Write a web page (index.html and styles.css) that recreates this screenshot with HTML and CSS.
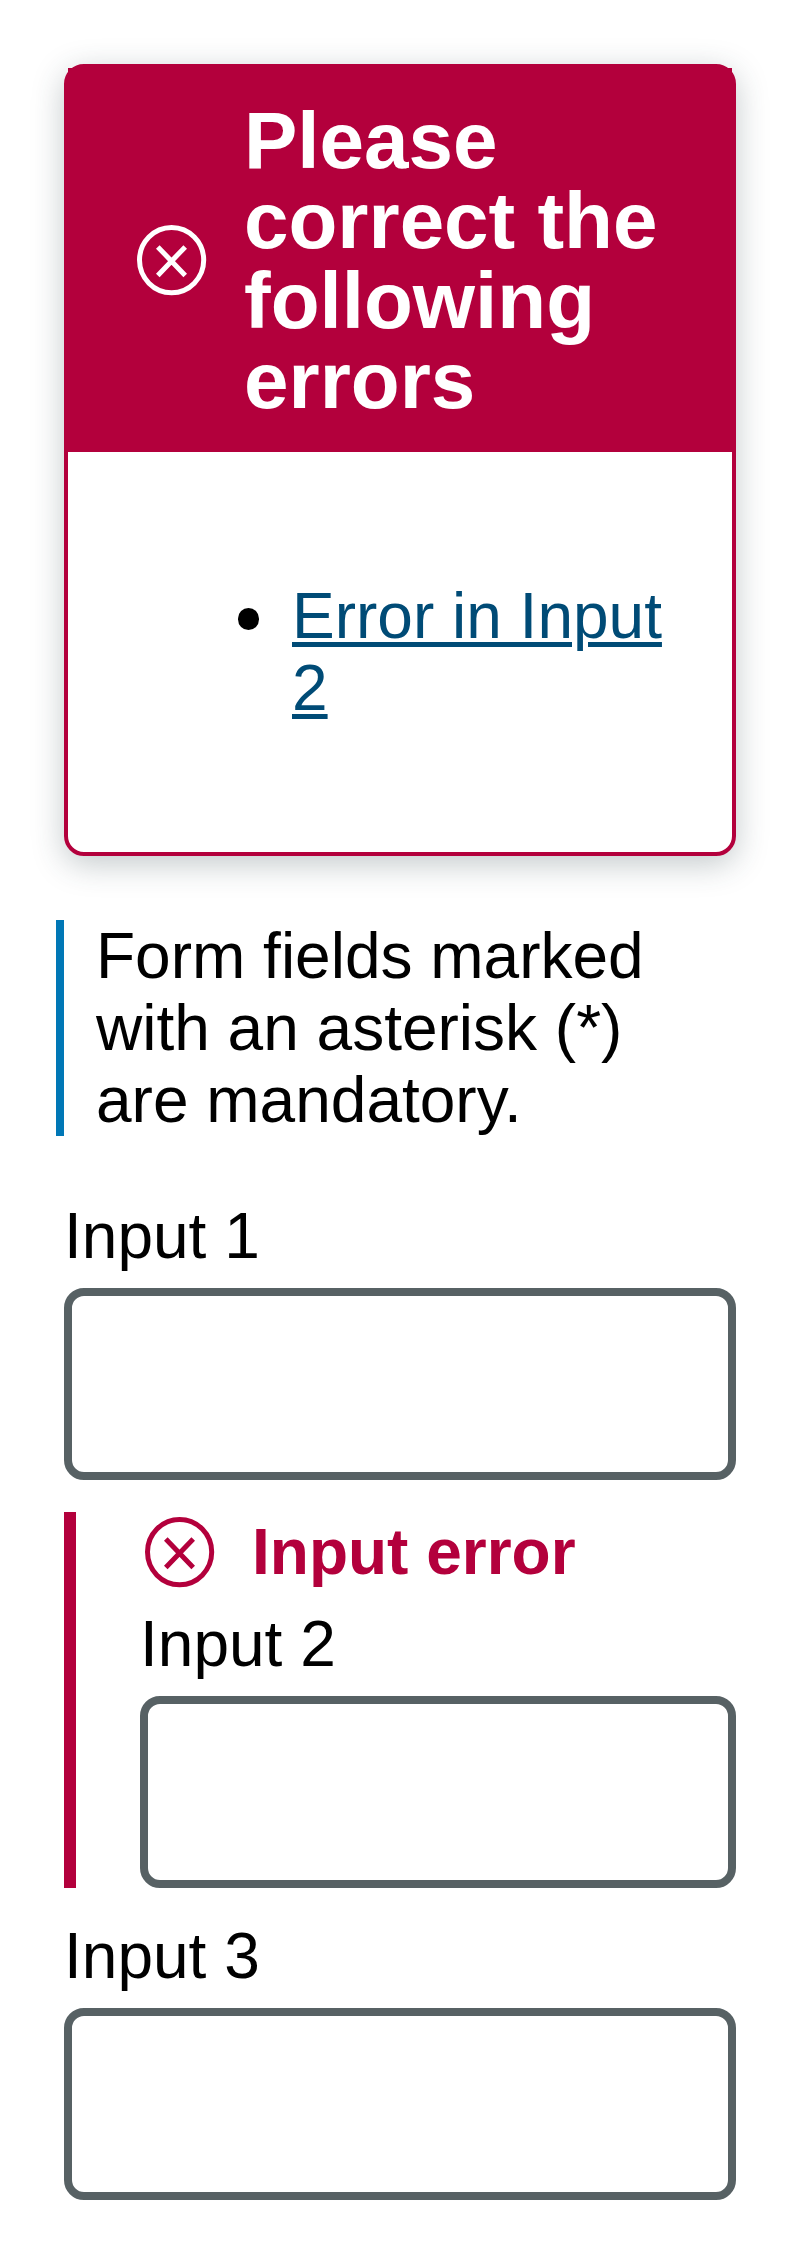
FILE: index.html
```html
<!DOCTYPE html>
<html lang="en">
<head>
<meta charset="utf-8">
<title>Form errors</title>
<link rel="stylesheet" href="styles.css">
</head>
<body>
<main class="page">
  <section class="summary">
    <div class="summary-header">
      <svg class="icon" viewBox="0 0 80 80" aria-hidden="true"><ellipse cx="39.6" cy="40.1" rx="32.1" ry="32.6"/><path d="M25.8 26.9 53.2 55.4M53.2 26.9 25.8 55.4"/></svg>
      <h2 class="summary-title">Please correct the following errors</h2>
    </div>
    <ul class="summary-list">
      <li class="summary-item"><a class="summary-link" href="#input2">Error in Input 2</a></li>
    </ul>
  </section>
  <p class="note">Form fields marked with an asterisk (*) are mandatory.</p>
  <form class="form">
    <div class="field">
      <label class="label" for="input1">Input 1</label>
      <input class="input" id="input1" type="text">
    </div>
    <div class="field field-error">
      <div class="error">
        <svg class="icon" viewBox="0 0 80 80" aria-hidden="true"><ellipse cx="39.6" cy="40.1" rx="32.1" ry="32.6"/><path d="M25.8 26.9 53.2 55.4M53.2 26.9 25.8 55.4"/></svg>
        <span>Input error</span>
      </div>
      <label class="label" for="input2">Input 2</label>
      <input class="input" id="input2" type="text">
    </div>
    <div class="field">
      <label class="label" for="input3">Input 3</label>
      <input class="input" id="input3" type="text">
    </div>
  </form>
</main>
</body>
</html>
```
FILE: styles.css
```css
* { box-sizing: border-box; }
body {
  margin: 0;
  background: #fff;
  color: #000;
  font: 64px/72px "Liberation Sans", Arial, sans-serif;
}
.page { padding: 64px; }
.summary {
  border: 4px solid #b3003c;
  border-radius: 20px;
  box-shadow: 0 8px 32px rgba(40, 60, 70, .28);
}
.summary-header {
  display: flex;
  align-items: center;
  gap: 32px;
  padding: 32px 64px;
  background: #b3003c;
  color: #fff;
}
.summary-title {
  margin: 0 0 -1px;
  padding-top: 1px;
  font-size: 80px;
  line-height: 80px;
  font-weight: 700;
}
.summary-list {
  margin: 0;
  padding: 128px 64px 128px 169.5px;
  list-style: none;
}
.summary-item {
  display: flex;
  gap: 33px;
}
.summary-item::before {
  content: "";
  flex: none;
  width: 21.5px;
  height: 21.5px;
  margin-top: 28px;
  border-radius: 50%;
  background: #000;
}
.summary-link {
  color: #004b76;
  text-decoration-thickness: 5px;
  text-underline-offset: 4px;
  text-decoration-skip-ink: auto;
}
.icon {
  flex: none;
  width: 80px;
  height: 80px;
  fill: none;
  stroke: currentColor;
  stroke-width: 5;
}
.note {
  margin: 64px 0 64px -8px;
  padding: 0 64px 0 32px;
  border-left: 8px solid #0077b6;
}
.form {
  display: flex;
  flex-direction: column;
  gap: 32px;
}
.field {
  display: flex;
  flex-direction: column;
  gap: 16px;
}
.field-error {
  padding-left: 64px;
  border-left: 12px solid #b3003c;
}
.error {
  display: flex;
  align-items: center;
  gap: 32px;
  color: #b3003c;
  font-weight: 700;
}
.input {
  width: 100%;
  height: 192px;
  padding: 0 32px;
  border: 8px solid #576164;
  border-radius: 20px;
  background: #fff;
  font: inherit;
  outline: none;
}
```
